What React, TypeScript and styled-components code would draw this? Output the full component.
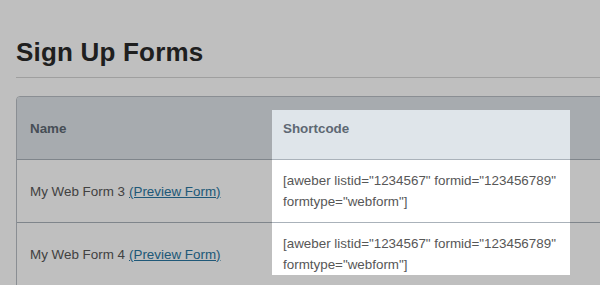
import { FC } from 'react'
import styled, { createGlobalStyle } from 'styled-components'

const GlobalStyle = createGlobalStyle`
  html, body {
    margin: 0;
    padding: 0;
    background: #ffffff;
    font-family: 'Liberation Sans', Arial, sans-serif;
  }
`

const Page = styled.div`
  position: relative;
  width: 600px;
  height: 285px;
  overflow: hidden;
  padding-left: 16px;
  box-sizing: border-box;
`

const Title = styled.h1`
  margin: 37px 0 0;
  font-size: 26px;
  line-height: 30px;
  font-weight: 700;
  color: #2a2a2a;
  letter-spacing: 0.2px;
`

const Rule = styled.hr`
  margin: 10px 0 18px;
  border: 0;
  border-top: 1px solid #d4d4d4;
  height: 0;
`

const Table = styled.div`
  width: 640px;
  border: 1px solid #b9bec4;
  border-radius: 4px 4px 0 0;
  overflow: hidden;
`

const Row = styled.div<{ $head?: boolean }>`
  display: grid;
  grid-template-columns: 253px 310px 1fr;
  height: 62px;
  background: ${(p) => (p.$head ? '#dfe5ea' : '#ffffff')};
  & + & {
    border-top: 1px solid #aab2ba;
  }
`

const Cell = styled.div<{ $head?: boolean }>`
  display: flex;
  align-items: center;
  padding: 0 13px;
  font-size: 13.4px;
  font-weight: ${(p) => (p.$head ? 700 : 400)};
  color: ${(p) => (p.$head ? '#5e6873' : '#575757')};
  line-height: 21px;
`

const Preview = styled.a`
  color: #2a76a0;
  text-decoration: underline;
  margin-left: 4px;
`

const Spotlight = styled.div`
  position: absolute;
  left: 272px;
  top: 110px;
  width: 298px;
  height: 165px;
  box-shadow: 0 0 0 2000px rgba(0, 0, 0, 0.25);
  pointer-events: none;
`

const forms = [3, 4]

const App: FC = () => {
  return (
    <Page>
      <GlobalStyle />
      <Title>Sign Up Forms</Title>
      <Rule />
      <Table>
        <Row $head>
          <Cell $head>Name</Cell>
          <Cell $head>Shortcode</Cell>
          <Cell $head />
        </Row>
        {forms.map((n) => (
          <Row key={n}>
            <Cell>
              My Web Form {n}
              <Preview href="#">(Preview Form)</Preview>
            </Cell>
            <Cell>
              [aweber listid="1234567" formid="123456789" formtype="webform"]
            </Cell>
            <Cell />
          </Row>
        ))}
      </Table>
      <Spotlight />
    </Page>
  )
}

export default App
